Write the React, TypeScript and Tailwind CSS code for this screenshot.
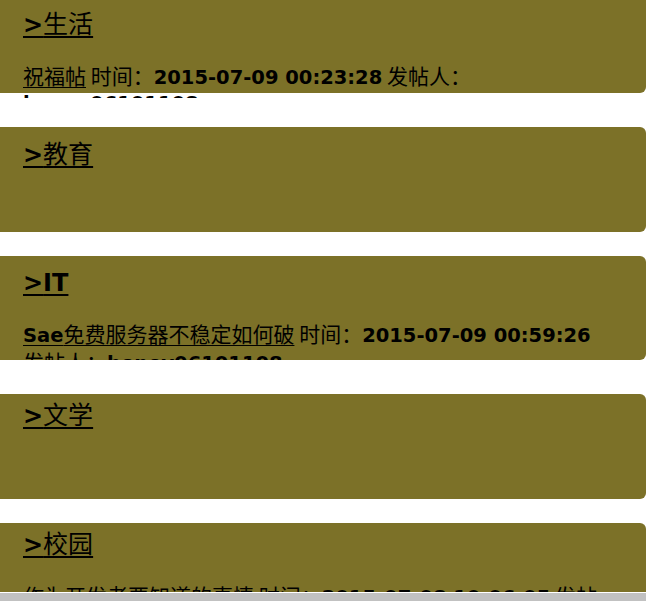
import React from "react";

const ZH = "font-['Noto_Sans_CJK_SC',sans-serif] font-normal";
const LA = "font-['DejaVu_Sans','Noto_Sans_CJK_SC',sans-serif] font-bold";

type Post = { title: React.ReactNode; time: string; user: string };

function Heading({ label, latin }: { label: string; latin?: boolean }) {
  return (
    <div className="leading-[30px]">
      <a className="underline decoration-2 underline-offset-[3px] text-black">
        <span className={`${LA} text-[24px]`}>&gt;</span>
        {latin ? (
          <span className={`${LA} text-[24px]`}>{label}</span>
        ) : (
          <span className={`${ZH} text-[25px]`}>{label}</span>
        )}
      </a>
    </div>
  );
}

function PostLine({ post }: { post: Post }) {
  return (
    <div className="mt-[21px] leading-[25px] text-black">
      <a className="underline decoration-1 underline-offset-[3px]">{post.title}</a>
      <span className={`${ZH} text-[21px]`}> 时间：</span>
      <span className={`${LA} text-[19.5px]`}>{post.time}</span>
      <span className={`${ZH} text-[21px]`}> 发帖人：</span>
      <span className={`${LA} text-[19.5px]`}>{post.user}</span>
    </div>
  );
}

export default function App() {
  return (
    <div className="h-[601px] w-[646px] flex flex-col bg-white overflow-hidden">
      <div className="flex-1 overflow-hidden">
        {/* 生活 */}
        <div className="-mt-[3px] h-[101px] overflow-hidden">
          <div className="h-[96px] bg-[#7c7128] rounded-br-[6px] pl-[23px] pr-[31px] pt-[10px]">
            <Heading label="生活" />
            <PostLine
              post={{
                title: <span className={`${ZH} text-[21px]`}>祝福帖</span>,
                time: "2015-07-09 00:23:28",
                user: "honey06101108",
              }}
            />
          </div>
        </div>

        {/* 教育 */}
        <div className="mt-[29px] h-[105px] bg-[#7c7128] rounded-r-[6px] pl-[23px] pr-[31px] pt-[10px] overflow-hidden">
          <Heading label="教育" />
        </div>

        {/* IT */}
        <div className="mt-[24px] h-[104px] bg-[#7c7128] rounded-r-[6px] pl-[23px] pr-[31px] pt-[12px] overflow-hidden">
          <Heading label="IT" latin />
          <PostLine
            post={{
              title: (
                <>
                  <span className={`${LA} text-[19.5px]`}>Sae</span>
                  <span className={`${ZH} text-[21px]`}>免费服务器不稳定如何破</span>
                </>
              ),
              time: "2015-07-09 00:59:26",
              user: "honey06101108",
            }}
          />
        </div>

        {/* 文学 */}
        <div className="mt-[34px] h-[105px] bg-[#7c7128] rounded-r-[6px] pl-[23px] pr-[31px] pt-[4px] overflow-hidden">
          <Heading label="文学" />
        </div>

        {/* 校园 */}
        <div className="mt-[24px] h-[105px] bg-[#7c7128] rounded-r-[6px] pl-[23px] pr-[31px] pt-[4px] overflow-hidden">
          <Heading label="校园" />
          <PostLine
            post={{
              title: <span className={`${ZH} text-[21px]`}>作为开发者要知道的事情</span>,
              time: "2015-07-08 10:06:05",
              user: "honey06101108",
            }}
          />
        </div>
      </div>
      <div className="h-[9px] border-t border-white bg-[#c1c1c1]" />
    </div>
  );
}
